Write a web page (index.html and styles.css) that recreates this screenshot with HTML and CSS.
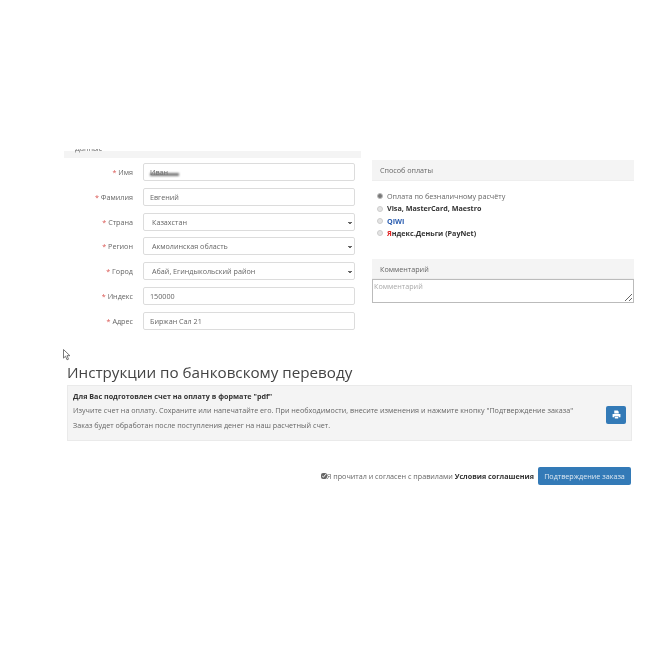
FILE: index.html
```html
<!DOCTYPE html>
<html lang="ru">
<head>
    <meta charset="UTF-8">
    <meta name="viewport" content="width=device-width, initial-scale=1.0">
    <title>Оформление заказа</title>
    <link rel="stylesheet" href="styles.css">
</head>
<body>
    <div class="page">
        <div class="columns">
            <div class="customer">
                <div class="customer-head"><span>Данные</span></div>
                <form class="fields">
                    <div class="field">
                        <label for="name"><b>*</b> Имя</label>
                        <div class="control">
                            <input type="text" id="name" value="Иван">
                            <span class="smudge"></span>
                        </div>
                    </div>
                    <div class="field">
                        <label for="surname"><b>*</b> Фамилия</label>
                        <div class="control"><input type="text" id="surname" value="Евгений"></div>
                    </div>
                    <div class="field">
                        <label for="country"><b>*</b> Страна</label>
                        <div class="control">
                            <select id="country"><option>Казахстан</option></select>
                        </div>
                    </div>
                    <div class="field">
                        <label for="region"><b>*</b> Регион</label>
                        <div class="control">
                            <select id="region"><option>Акмолинская область</option></select>
                        </div>
                    </div>
                    <div class="field">
                        <label for="city"><b>*</b> Город</label>
                        <div class="control">
                            <select id="city"><option>Абай, Егиндыкольский район</option></select>
                        </div>
                    </div>
                    <div class="field">
                        <label for="zip"><b>*</b> Индекс</label>
                        <div class="control"><input type="text" id="zip" value="150000"></div>
                    </div>
                    <div class="field">
                        <label for="address"><b>*</b> Адрес</label>
                        <div class="control"><input type="text" id="address" value="Биржан Сал 21"></div>
                    </div>
                </form>
            </div>

            <div class="side">
                <div class="panel-head">Способ оплаты</div>
                <ul class="pay-list">
                    <li><label><input type="radio" name="pay" checked><span>Оплата по безналичному расчёту</span></label></li>
                    <li><label class="strong"><input type="radio" name="pay"><span>Visa, MasterCard, Maestro</span></label></li>
                    <li><label class="strong qiwi"><input type="radio" name="pay"><span>QIWI</span></label></li>
                    <li><label class="strong"><input type="radio" name="pay"><span><span class="ya">Я</span>ндекс.Деньги (PayNet)</span></label></li>
                </ul>
                <div class="panel-head comment-head">Комментарий</div>
                <textarea class="comment" placeholder="Комментарий"></textarea>
            </div>
        </div>

        <svg class="cursor" width="8" height="12" viewBox="0 0 8 12">
            <path d="M.5.5v8.6l2-1.9 1.5 3.6 1.5-.6-1.5-3.5h2.9z" fill="#fff" stroke="#555" stroke-width=".8"/>
        </svg>

        <h2 class="title">Инструкции по банковскому переводу</h2>
        <div class="instructions">
            <div class="instructions-text">
                <p class="lead">Для Вас подготовлен счет на оплату в формате "pdf"</p>
                <p>Изучите счет на оплату. Сохраните или напечатайте его. При необходимости, внесите изменения и нажмите кнопку "Подтверждение заказа"</p>
                <p>Заказ будет обработан после поступления денег на наш расчетный счет.</p>
            </div>
            <button class="btn btn-print" type="button" aria-label="Печать">
                <svg width="9" height="9" viewBox="0 0 16 16">
                    <path d="M4 1h6l2 2v3H4zM1 7h14v6h-3v-2H4v2H1zM5 12h6v3H5z" fill="#fff"/>
                </svg>
            </button>
        </div>

        <div class="confirm">
            <label class="agree"><input type="checkbox" checked><span>Я прочитал и согласен с правилами <b>Условия соглашения</b></span></label>
            <button class="btn btn-confirm" type="button">Подтверждение заказа</button>
        </div>
    </div>
</body>
</html>
```

FILE: styles.css
```css
:root {
    --text: #666;
    --strong: #333;
    --border: #dcdcdc;
    --head-bg: #f4f4f4;
    --primary: #337ab7;
}

body {
    font-family: "Open Sans", "Noto Sans", sans-serif;
    font-size: 7.2px;
    margin: 0;
    background-color: #fff;
    color: var(--text);
}

.page {
    position: relative;
    height: 650px;
    padding: 149px 16px 0 64px;
    box-sizing: border-box;
    filter: blur(0.4px);
}

.columns {
    display: flex;
    gap: 11px;
}

.customer {
    width: 297px;
}

.customer-head {
    height: 9px;
    overflow: hidden;
    background-image: linear-gradient(#fff 2px, var(--head-bg) 2px);
    line-height: 8px;
    padding-left: 11px;
}

.customer-head span {
    display: block;
    margin-top: -5px;
}

.fields {
    display: flex;
    flex-direction: column;
    gap: 6.75px;
    margin-top: 5px;
}

.field {
    display: flex;
    align-items: center;
}

.field label {
    width: 69px;
    text-align: right;
    margin-right: 10px;
    flex-shrink: 0;
}

.field label b {
    color: #d9534f;
    font-weight: 400;
}

.control {
    position: relative;
    width: 212px;
}

.control input,
.control select {
    display: block;
    width: 100%;
    height: 18px;
    box-sizing: border-box;
    border: 1px solid var(--border);
    border-radius: 2px;
    padding: 0 6px;
    font-family: inherit;
    font-size: 7.2px;
    color: var(--text);
    background-color: #fff;
}

.control select {
    appearance: none;
    padding-left: 8px;
    background-image: linear-gradient(45deg, transparent 50%, #666 50%), linear-gradient(-45deg, transparent 50%, #666 50%);
    background-position: 204px 8px, 206px 8px;
    background-size: 2px 2px;
    background-repeat: no-repeat;
}

.smudge {
    position: absolute;
    left: 7px;
    top: 10px;
    width: 29px;
    height: 3px;
    background-color: #777;
    filter: blur(1.2px);
}

.side {
    width: 262px;
    margin-top: 11px;
}

.panel-head {
    height: 21px;
    line-height: 20px;
    padding-left: 8px;
    background-color: var(--head-bg);
    border-bottom: 1px solid #eee;
    box-sizing: border-box;
}

.pay-list {
    list-style: none;
    margin: 9px 0 0;
    padding: 0 0 0 5px;
}

.pay-list li {
    height: 12.4px;
    line-height: 12.4px;
}

.pay-list label {
    display: flex;
    align-items: center;
    gap: 4px;
    white-space: pre;
}

.pay-list input {
    appearance: none;
    width: 6px;
    height: 6px;
    margin: 0;
    border-radius: 50%;
    background-color: #e4e4e4;
    border: 1px solid #ccc;
    box-sizing: border-box;
}

.pay-list input:checked {
    background-color: #777;
    border-color: #bbb;
}

.strong {
    font-weight: 700;
    color: var(--strong);
}

.pay-list .qiwi {
    color: #2a5db0;
}

.ya {
    color: #e02020;
}

.comment-head {
    margin-top: 19px;
    height: 20px;
}

.comment {
    display: block;
    width: 100%;
    height: 24px;
    box-sizing: border-box;
    margin: 0;
    padding: 1px;
    border: 1px solid #bbb;
    font-family: inherit;
    font-size: 7.2px;
    color: var(--text);
}

.comment::placeholder {
    color: #aaa;
}

.cursor {
    position: absolute;
    left: 63px;
    top: 349px;
}

.title {
    margin: 31px 0 0 3px;
    font-size: 15.2px;
    line-height: 23px;
    font-weight: 400;
    color: #444;
}

.instructions {
    display: flex;
    align-items: flex-start;
    justify-content: space-between;
    width: 565px;
    height: 56px;
    margin: 1px 0 0 3px;
    padding: 3px 5px 0 5px;
    box-sizing: border-box;
    background-color: var(--head-bg);
    border: 1px solid #eaeaea;
}

.instructions p {
    margin: 0;
    line-height: 14.5px;
}

.instructions .lead {
    font-weight: 700;
    color: var(--strong);
}

.btn {
    background-color: var(--primary);
    color: #dde8f2;
    border: none;
    border-radius: 2px;
    font-family: inherit;
    font-size: 7.2px;
    padding: 0;
}

.btn-print {
    display: flex;
    align-items: center;
    justify-content: center;
    width: 20px;
    height: 18px;
    margin-top: 17px;
}

.confirm {
    display: flex;
    align-items: center;
    justify-content: flex-end;
    gap: 4px;
    width: 567px;
    margin-top: 26px;
}

.agree {
    display: flex;
    align-items: center;
    white-space: pre;
}

.agree input {
    width: 6px;
    height: 6px;
    margin: 0;
    accent-color: #666;
}

.agree b {
    color: var(--strong);
}

.btn-confirm {
    width: 93px;
    height: 18px;
}
```
